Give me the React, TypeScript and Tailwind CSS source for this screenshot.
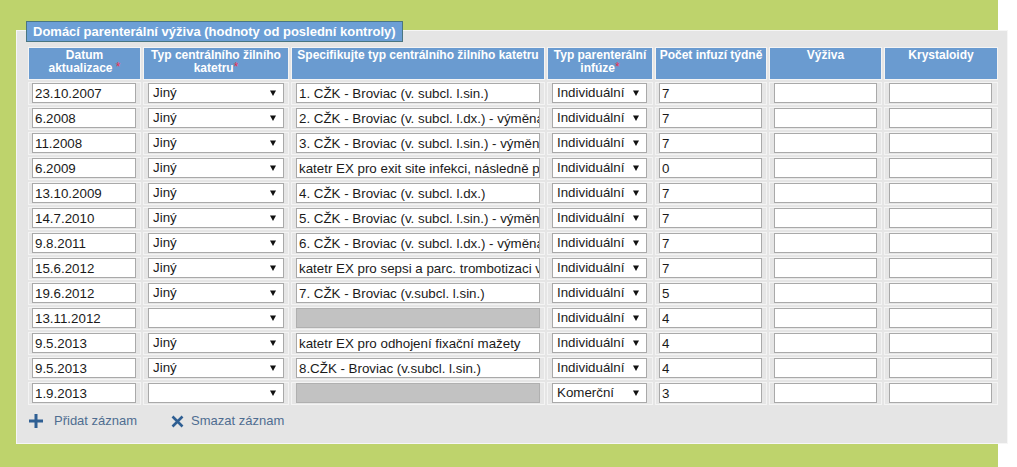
import React from "react";

type Row = {
  date: string;
  typ: string;
  spec: string;
  disabled?: boolean;
  inf: string;
  pocet: string;
};

const rows: Row[] = [
  { date: "23.10.2007", typ: "Jiný", spec: "1. CŽK - Broviac (v. subcl. l.sin.)", inf: "Individuální", pocet: "7" },
  { date: "6.2008", typ: "Jiný", spec: "2. CŽK - Broviac (v. subcl. l.dx.) - výměna katetru", inf: "Individuální", pocet: "7" },
  { date: "11.2008", typ: "Jiný", spec: "3. CŽK - Broviac (v. subcl. l.sin.) - výměna katetru", inf: "Individuální", pocet: "7" },
  { date: "6.2009", typ: "Jiný", spec: "katetr EX pro exit site infekci, následně pro sepsi", inf: "Individuální", pocet: "0" },
  { date: "13.10.2009", typ: "Jiný", spec: "4. CŽK - Broviac (v. subcl. l.dx.)", inf: "Individuální", pocet: "7" },
  { date: "14.7.2010", typ: "Jiný", spec: "5. CŽK - Broviac (v. subcl. l.sin.) - výměna katetru", inf: "Individuální", pocet: "7" },
  { date: "9.8.2011", typ: "Jiný", spec: "6. CŽK - Broviac (v. subcl. l.dx.) - výměna katetru", inf: "Individuální", pocet: "7" },
  { date: "15.6.2012", typ: "Jiný", spec: "katetr EX pro sepsi a parc. trombotizaci v. subcl.", inf: "Individuální", pocet: "7" },
  { date: "19.6.2012", typ: "Jiný", spec: "7. CŽK - Broviac (v.subcl. l.sin.)", inf: "Individuální", pocet: "5" },
  { date: "13.11.2012", typ: "", spec: "", disabled: true, inf: "Individuální", pocet: "4" },
  { date: "9.5.2013", typ: "Jiný", spec: "katetr EX pro odhojení fixační mažety", inf: "Individuální", pocet: "4" },
  { date: "9.5.2013", typ: "Jiný", spec: "8.CŽK - Broviac (v.subcl. l.sin.)", inf: "Individuální", pocet: "4" },
  { date: "1.9.2013", typ: "", spec: "", disabled: true, inf: "Komerční", pocet: "3" },
];

const font = { fontFamily: '"Liberation Sans", Arial, sans-serif' };

const cell = "border border-[#f4f4f4] bg-[#e6e6e6] h-[23px]";
const inputCls =
  "block w-full h-[20px] border border-[#a9a9a9] bg-white pl-[2px] pr-0 text-[13.33px] leading-[18px] text-[#1a1a1a] outline-none";

function Field({ value, disabled }: { value: string; disabled?: boolean }) {
  return (
    <input
      readOnly
      value={value}
      className={disabled ? inputCls + " !bg-[#c2c2c2] !border-[#b0b0b0]" : inputCls}
      style={font}
    />
  );
}

function Select({ value }: { value: string }) {
  return (
    <div className="flex h-[20px] w-full items-center justify-between border border-[#a9a9a9] bg-white pl-[4px] pr-[7px] text-[13.33px] text-[#1a1a1a]">
      <span className="leading-[18px]">{value}</span>
      <svg width="6" height="6" viewBox="0 0 6 6" className="shrink-0">
        <polygon points="0,0.5 6,0.5 3,6" fill="#111" />
      </svg>
    </div>
  );
}

function Star() {
  return <span className="text-[#f0304f] text-[12px] leading-[10px] align-top font-normal">*</span>;
}

function Header({ children }: { children: React.ReactNode }) {
  return (
    <div className="border border-[#f4f4f4] bg-[#6a9bd0] h-[33px] pt-[1px] text-center text-[12px] font-bold leading-[13px] text-white">
      {children}
    </div>
  );
}

export default function App() {
  return (
    <div className="flex h-[467px] w-[1017px] overflow-hidden bg-white" style={font}>
      <div className="h-[467px] w-[998px] shrink-0 bg-[#bed36c] pl-[16px] pt-[30px]">
        <div className="w-[992px] border border-[#f6f6f6] bg-[#e5e5e5] pl-[11px] pb-[14px]">
          <div className="-mt-[10px] -ml-[2px] block w-fit h-[21px] border border-[#4a7681] bg-[#6c9fd6] px-[6px] text-[13px] font-bold leading-[19px] text-white">
            Domácí parenterální výživa (hodnoty od poslední kontroly)
          </div>
          <div className="mt-[5px] grid w-[970px] grid-cols-[113px_146px_254px_106px_112px_113px_114px] gap-[2px]">
            <Header>
              Datum
              <br />
              aktualizace <Star />
            </Header>
            <Header>
              Typ centrálního žilního
              <br />
              katetru<Star />
            </Header>
            <Header>Specifikujte typ centrálního žilního katetru</Header>
            <Header>
              Typ parenterální
              <br />
              infúze<Star />
            </Header>
            <Header>Počet infuzí týdně</Header>
            <Header>Výživa</Header>
            <Header>Krystaloidy</Header>
            {rows.map((r, i) => (
              <React.Fragment key={i}>
                <div className={cell + " pl-[3px] pr-[4px]"}>
                  <Field value={r.date} />
                </div>
                <div className={cell + " px-[4px]"}>
                  <Select value={r.typ} />
                </div>
                <div className={cell + " px-[4px]"}>
                  <Field value={r.spec} disabled={r.disabled} />
                </div>
                <div className={cell + " pl-[4px] pr-[5px]"}>
                  <Select value={r.inf} />
                </div>
                <div className={cell + " pl-[3px] pr-[4px]"}>
                  <Field value={r.pocet} />
                </div>
                <div className={cell + " px-[4px]"}>
                  <Field value="" />
                </div>
                <div className={cell + " pl-[4px] pr-[5px]"}>
                  <Field value="" />
                </div>
              </React.Fragment>
            ))}
          </div>
          <div className="mt-[8px] flex h-[16px] items-center text-[13px] text-[#4f6d91]">
            <svg width="16" height="16" viewBox="0 0 16 16" className="shrink-0">
              <path d="M8 1 V15 M1 8 H15" stroke="#2f5f93" strokeWidth="3" />
            </svg>
            <span className="ml-[10px]">Přidat záznam</span>
            <svg width="13" height="13" viewBox="0 0 13 13" className="ml-[34px] shrink-0">
              <path d="M1.5 1.5 L11.5 11.5 M11.5 1.5 L1.5 11.5" stroke="#2f5f93" strokeWidth="2.6" />
            </svg>
            <span className="ml-[7px]">Smazat záznam</span>
          </div>
        </div>
      </div>
    </div>
  );
}
